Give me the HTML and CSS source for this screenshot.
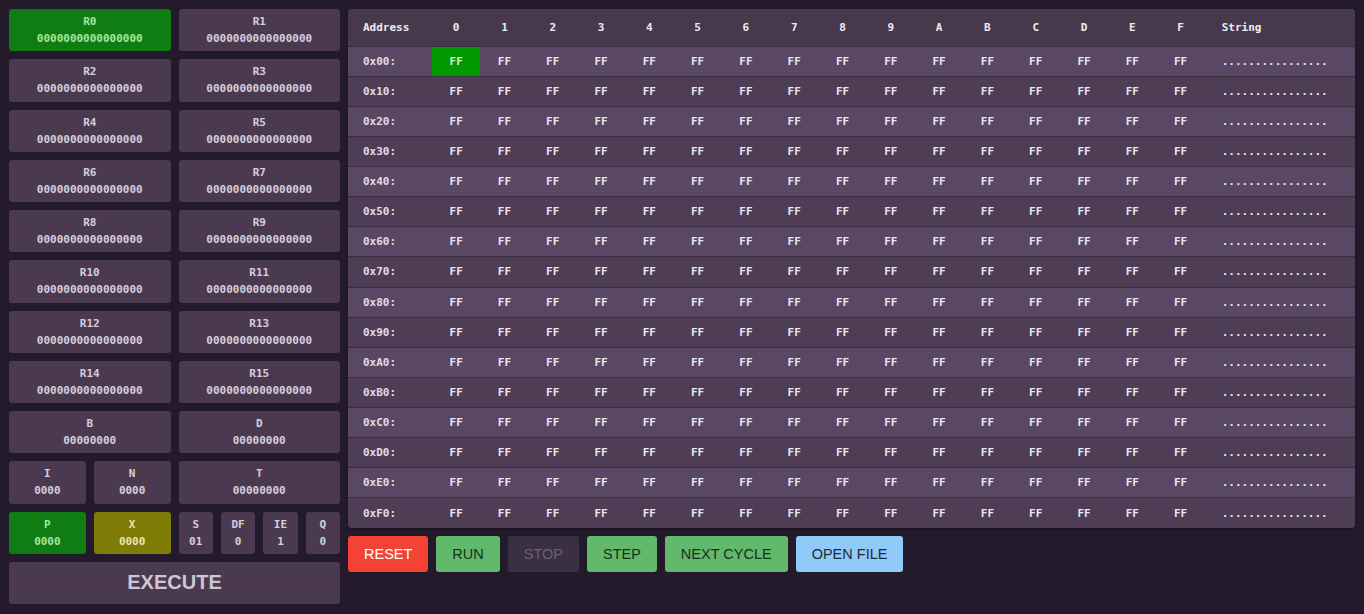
FILE: index.html
```html
<!DOCTYPE html>
<html>
<head>
<meta charset="utf-8">
<link rel="stylesheet" href="styles.css">
</head>
<body>
<div class="app">
  <div class="regs">
    <div class="card green"><div>R0</div><div>0000000000000000</div></div>
    <div class="card"><div>R1</div><div>0000000000000000</div></div>
    <div class="card"><div>R2</div><div>0000000000000000</div></div>
    <div class="card"><div>R3</div><div>0000000000000000</div></div>
    <div class="card"><div>R4</div><div>0000000000000000</div></div>
    <div class="card"><div>R5</div><div>0000000000000000</div></div>
    <div class="card"><div>R6</div><div>0000000000000000</div></div>
    <div class="card"><div>R7</div><div>0000000000000000</div></div>
    <div class="card"><div>R8</div><div>0000000000000000</div></div>
    <div class="card"><div>R9</div><div>0000000000000000</div></div>
    <div class="card"><div>R10</div><div>0000000000000000</div></div>
    <div class="card"><div>R11</div><div>0000000000000000</div></div>
    <div class="card"><div>R12</div><div>0000000000000000</div></div>
    <div class="card"><div>R13</div><div>0000000000000000</div></div>
    <div class="card"><div>R14</div><div>0000000000000000</div></div>
    <div class="card"><div>R15</div><div>0000000000000000</div></div>
    <div class="card"><div>B</div><div>00000000</div></div>
    <div class="card"><div>D</div><div>00000000</div></div>
    <div class="split2">
      <div class="card"><div>I</div><div>0000</div></div>
      <div class="card"><div>N</div><div>0000</div></div>
    </div>
    <div class="card"><div>T</div><div>00000000</div></div>
    <div class="split2">
      <div class="card green"><div>P</div><div>0000</div></div>
      <div class="card olive"><div>X</div><div>0000</div></div>
    </div>
    <div class="split4">
      <div class="card"><div>S</div><div>01</div></div>
      <div class="card"><div>DF</div><div>0</div></div>
      <div class="card"><div>IE</div><div>1</div></div>
      <div class="card"><div>Q</div><div>0</div></div>
    </div>
    <div class="execute">EXECUTE</div>
  </div>
  <div class="right">
    <div class="memwrap">
      <table class="mem">
        <colgroup>
          <col class="c-addr">
          <col class="c-b"><col class="c-b"><col class="c-b"><col class="c-b">
          <col class="c-b"><col class="c-b"><col class="c-b"><col class="c-b">
          <col class="c-b"><col class="c-b"><col class="c-b"><col class="c-b">
          <col class="c-b"><col class="c-b"><col class="c-b"><col class="c-b">
          <col class="c-str">
        </colgroup>
        <thead>
          <tr><th class="addr">Address</th><th>0</th><th>1</th><th>2</th><th>3</th><th>4</th><th>5</th><th>6</th><th>7</th><th>8</th><th>9</th><th>A</th><th>B</th><th>C</th><th>D</th><th>E</th><th>F</th><th class="str">String</th></tr>
        </thead>
        <tbody id="rows"></tbody>
      </table>
    </div>
    <div class="buttons">
      <button class="btn red">RESET</button>
      <button class="btn grn">RUN</button>
      <button class="btn dis">STOP</button>
      <button class="btn grn">STEP</button>
      <button class="btn grn">NEXT CYCLE</button>
      <button class="btn blue">OPEN FILE</button>
    </div>
  </div>
</div>
<script src="app.js"></script>
</body>
</html>
```
FILE: styles.css
```css
* { box-sizing: border-box; }
html, body { margin: 0; padding: 0; }
body {
  background: #231b2b;
  font-family: "DejaVu Sans Mono", "Liberation Mono", monospace;
  width: 1364px;
  height: 614px;
  overflow: hidden;
}
.app {
  display: flex;
  gap: 8px;
  padding: 9px;
}
.regs {
  width: 331px;
  flex: none;
  display: grid;
  grid-template-columns: 1fr 1fr;
  grid-auto-rows: 42.25px;
  gap: 8px;
}
.split2, .split4 {
  display: grid;
  gap: 8px;
}
.split2 { grid-template-columns: 1fr 1fr; }
.split4 { grid-template-columns: repeat(4, 1fr); }
.card {
  background: #4b3a4f;
  border-radius: 3px;
  color: #d6cedc;
  font-size: 11px;
  font-weight: bold;
  line-height: 17px;
  display: flex;
  flex-direction: column;
  align-items: center;
  justify-content: center;
  text-align: center;
}
.card.green { background: #0f7d12; color: #a6e6a0; }
.card.olive { background: #7e7b06; color: #e8e6a8; }
.execute {
  grid-column: 1 / 3;
  background: #4b3a4f;
  border-radius: 3px;
  color: #cec6d2;
  font-family: "Liberation Sans", Arial, sans-serif;
  font-weight: bold;
  font-size: 20px;
  display: flex;
  align-items: center;
  justify-content: center;
}
.right {
  width: 1007px;
  display: flex;
  flex-direction: column;
  gap: 8px;
}
.memwrap {
  background: #4e3d54;
  border-radius: 4px;
  overflow: hidden;
  box-shadow: 0 1px 3px rgba(0,0,0,0.4);
}
.mem {
  width: 100%;
  border-collapse: collapse;
  table-layout: fixed;
  font-size: 11px;
  font-weight: bold;
  color: #ece6f2;
}
.c-addr { width: 84px; }
.c-b { width: 48.3px; }
.mem thead tr { height: 37px; background: #47384b; }
.mem th { text-align: center; padding: 0; color: #f0eaf4; }
.mem th.addr, .mem td.addr { text-align: left; padding-left: 15px; }
.mem th.str, .mem td.str { text-align: left; padding-left: 17px; }
.mem tbody tr { height: 30.13px; border-top: 1px solid #3a2d40; }
.mem tbody tr:nth-child(odd) { background: #5a4763; }
.mem tbody tr:nth-child(even) { background: #4e3d54; }
.mem td { text-align: center; padding: 0; }
.mem td.addr { color: #e2dae8; }
.mem td.hl { background: #009900; color: #d8f5d8; }
.buttons {
  display: flex;
  gap: 8px;
}
.btn {
  height: 36px;
  border: none;
  border-radius: 3px;
  padding: 0 16px;
  font-family: "Liberation Sans", Arial, sans-serif;
  font-size: 14.5px;
  cursor: pointer;
}
.btn.red { background: #f44336; color: #ffffff; }
.btn.grn { background: #62b96b; color: #17301a; }
.btn.dis { background: #3a3042; color: #6c6272; }
.btn.blue { background: #90caf9; color: #1c2a38; }
```
FILE: app.js
```js
var tb = document.getElementById('rows');
var hex = '0123456789ABCDEF';
for (var r = 0; r < 16; r++) {
  var tr = document.createElement('tr');
  var a = document.createElement('td');
  a.className = 'addr';
  a.textContent = '0x' + hex[r] + '0:';
  tr.appendChild(a);
  for (var c = 0; c < 16; c++) {
    var td = document.createElement('td');
    td.textContent = 'FF';
    if (r === 0 && c === 0) td.className = 'hl';
    tr.appendChild(td);
  }
  var s = document.createElement('td');
  s.className = 'str';
  s.textContent = '................';
  tr.appendChild(s);
  tb.appendChild(tr);
}
```
